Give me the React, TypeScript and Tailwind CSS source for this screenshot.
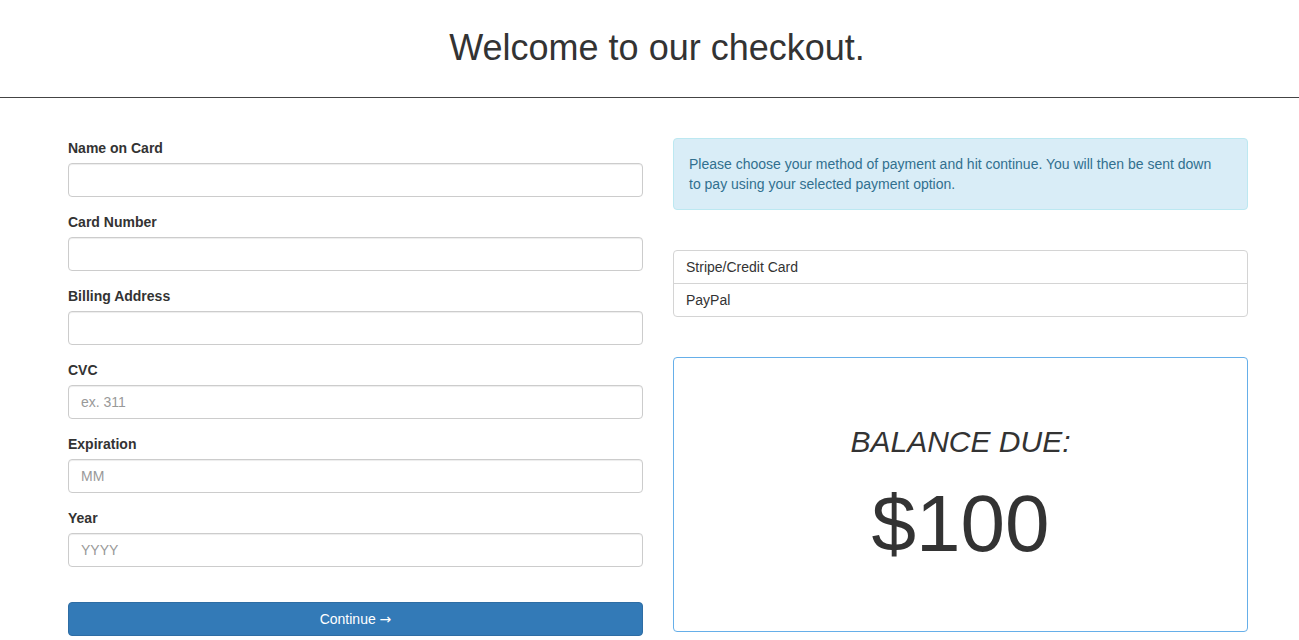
const fields = [
  { label: "Name on Card", placeholder: "" },
  { label: "Card Number", placeholder: "" },
  { label: "Billing Address", placeholder: "" },
  { label: "CVC", placeholder: "ex. 311" },
  { label: "Expiration", placeholder: "MM" },
  { label: "Year", placeholder: "YYYY" },
];

const methods = ["Stripe/Credit Card", "PayPal"];

function Header() {
  return (
    <header className="border-b border-[#444] pl-[15px] pt-[28px] pb-[29px] text-center">
      <h1 className="text-[36px] leading-[1.1] text-[#333]">
        Welcome to our checkout.
      </h1>
    </header>
  );
}

function CardForm() {
  return (
    <form className="w-[575px]" onSubmit={(e) => e.preventDefault()}>
      {fields.map((f) => (
        <div key={f.label} className="mb-[15px]">
          <label className="mb-[5px] block text-sm font-bold leading-5 text-[#333]">
            {f.label}
          </label>
          <input
            type="text"
            placeholder={f.placeholder}
            className="block h-[34px] w-full rounded border border-[#ccc] px-3 text-sm text-[#555] placeholder:text-[#999] shadow-[inset_0_1px_1px_rgba(0,0,0,.075)] outline-none"
          />
        </div>
      ))}
      <button
        type="submit"
        className="mt-5 h-[34px] w-full rounded border border-[#2e6da4] bg-[#337ab7] text-sm leading-5 text-white"
      >
        Continue <span className="font-['DejaVu_Sans',sans-serif]">→</span>
      </button>
    </form>
  );
}

function PaymentSide() {
  return (
    <div className="flex w-[575px] flex-col">
      <div className="rounded border border-[#bce8f1] bg-[#d9edf7] py-[15px] pl-[15px] pr-[28px] text-sm leading-5 text-[#31708f]">
        Please choose your method of payment and hit continue. You will then be
        sent down to pay using your selected payment option.
      </div>

      <ul className="mt-10 rounded border border-[#d4d4d4]">
        {methods.map((m, i) => (
          <li
            key={m}
            className={
              "px-3 py-[6px] text-sm leading-5 text-[#333] " +
              (i > 0 ? "border-t border-[#d4d4d4]" : "")
            }
          >
            {m}
          </li>
        ))}
      </ul>

      <div className="mt-10 flex h-[275px] flex-col items-center justify-center gap-[22px] rounded border border-[#66afe9] pt-[4px] text-[#333]">
        <h2 className="text-[30px] italic leading-[1.1]">BALANCE DUE:</h2>
        <p className="text-[80px] leading-[1.1]">$100</p>
      </div>
    </div>
  );
}

export default function App() {
  return (
    <div className="min-h-screen bg-white font-['Liberation_Sans',Arial,sans-serif] text-[#333]">
      <Header />
      <main className="flex gap-[30px] pl-[68px] pt-10">
        <CardForm />
        <PaymentSide />
      </main>
    </div>
  );
}
